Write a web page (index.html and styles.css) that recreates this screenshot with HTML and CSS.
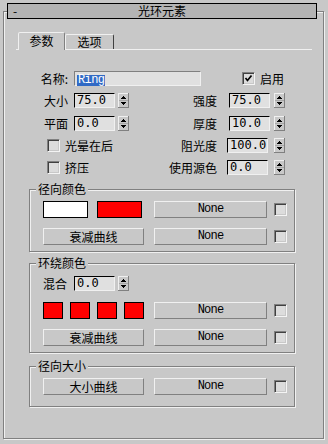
FILE: index.html
```html
<!DOCTYPE html>
<html lang="zh">
<head>
  <meta charset="UTF-8" />
  <title>光环元素</title>
  <link rel="stylesheet" href="styles.css">
</head>
<body>
  <svg class="defs" width="0" height="0">
    <symbol id="spin" viewBox="0 0 11 15">
      <rect x="0" y="0" width="11" height="15" fill="#c8c8c8"/>
      <path d="M0 0.5H10.5M0.5 0V14.5" stroke="#f0f0f0"/>
      <path d="M0 14.5H11M10.5 0V15" stroke="#808080"/>
      <path d="M1 7.5H10" stroke="#a8a8a8"/>
      <path d="M5 3h1v1H5zM4 4h3v1H4zM3 5h5v1H3z" fill="#000"/>
      <path d="M3 9h5v1H3zM4 10h3v1H4zM5 11h1v1H5z" fill="#000"/>
    </symbol>
  </svg>

  <div class="panel">
    <div class="titlebar">
      <span class="collapse">-</span>
      <span class="title">光环元素</span>
      <span></span>
    </div>

    <div class="tabs">
      <div class="tab active">参数</div>
      <div class="tab">选项</div>
    </div>

    <!-- 参数 -->
    <div class="params">
      <div class="row">
        <span class="label">名称:</span>
        <div class="field name"><span class="sel">Ring</span></div>
        <span class="check on">
          <svg width="9" height="9" viewBox="0 0 9 9"><polyline points="1.5,4 3.5,6.5 7.5,1.5" fill="none" stroke="#000" stroke-width="1.7"/></svg>
        </span>
        <span class="check-label">启用</span>
      </div>

      <div class="row">
        <span class="label">大小</span>
        <div class="field num">75.0</div>
        <svg class="spin"><use href="#spin"/></svg>
        <span class="label-r">强度</span>
        <div class="field num">75.0</div>
        <svg class="spin"><use href="#spin"/></svg>
      </div>

      <div class="row row-c">
        <span class="label">平面</span>
        <div class="field num">0.0</div>
        <svg class="spin"><use href="#spin"/></svg>
        <span class="label-r">厚度</span>
        <div class="field num">10.0</div>
        <svg class="spin"><use href="#spin"/></svg>
      </div>

      <div class="row row-check">
        <div class="cell-left">
          <span class="check"></span>
          <span class="check-label">光晕在后</span>
        </div>
        <span class="label-r">阻光度</span>
        <div class="field num">100.0</div>
        <svg class="spin"><use href="#spin"/></svg>
      </div>

      <div class="row row-check">
        <div class="cell-left">
          <span class="check"></span>
          <span class="check-label">挤压</span>
        </div>
        <span class="label-r">使用源色</span>
        <div class="field num">0.0</div>
        <svg class="spin"><use href="#spin"/></svg>
      </div>
    </div>

    <!-- 径向颜色 -->
    <div class="group">
      <div class="group-title">径向颜色</div>
      <div class="group-row">
        <span class="swatch wide white"></span>
        <span class="swatch wide red"></span>
        <button class="btn none">None</button>
        <span class="check box"></span>
      </div>
      <div class="group-row">
        <button class="btn curve">衰减曲线</button>
        <button class="btn none">None</button>
        <span class="check box"></span>
      </div>
    </div>

    <!-- 环绕颜色 -->
    <div class="group g2">
      <div class="group-title">环绕颜色</div>
      <div class="row mix">
        <span class="label">混合</span>
        <div class="field num">0.0</div>
        <svg class="spin"><use href="#spin"/></svg>
      </div>
      <div class="group-row">
        <span class="swatch sq red"></span>
        <span class="swatch sq red"></span>
        <span class="swatch sq red"></span>
        <span class="swatch sq red"></span>
        <button class="btn none">None</button>
        <span class="check box"></span>
      </div>
      <div class="group-row">
        <button class="btn curve">衰减曲线</button>
        <button class="btn none">None</button>
        <span class="check box"></span>
      </div>
    </div>

    <!-- 径向大小 -->
    <div class="group g3">
      <div class="group-title">径向大小</div>
      <div class="group-row">
        <button class="btn curve">大小曲线</button>
        <button class="btn none">None</button>
        <span class="check box"></span>
      </div>
    </div>
  </div>
</body>
</html>
```

FILE: styles.css
```css
* {
  margin: 0;
  padding: 0;
  box-sizing: border-box;
}

html, body {
  width: 328px;
  height: 444px;
  overflow: hidden;
}

body {
  background: #c8c8c8;
  color: #000;
  font-family: "Noto Sans CJK SC", sans-serif;
  font-size: 12px;
  line-height: 14px;
}

.defs {
  position: absolute;
}

.panel {
  margin: 11px 0 0 3px;
  width: 321px;
  height: 428px;
  border: 1px solid #808080;
  box-shadow: inset 1px 1px 0 #f0f0f0, 1px 1px 0 #f0f0f0;
}

.titlebar {
  display: grid;
  grid-template-columns: 1fr auto 1fr;
  align-items: center;
  width: 310px;
  height: 16px;
  margin: -9px 0 0 3px;
  border: 1px solid #000;
  background: #b4b4b4;
}

.collapse {
  padding-left: 5px;
}

/* tabs */
.tabs {
  display: flex;
  align-items: flex-end;
  width: 296px;
  height: 18px;
  margin: 13px 0 0 12px;
  padding-left: 2px;
  border-bottom: 1px solid #f0f0f0;
}

.tab {
  width: 49px;
  height: 15px;
  border: 1px solid;
  border-bottom: none;
  border-color: #f0f0f0 #404040 transparent #f0f0f0;
  border-radius: 2px 2px 0 0;
  text-align: center;
  line-height: 13px;
}

.tab.active {
  width: 47px;
  height: 18px;
  margin-bottom: -1px;
  border-right-color: #808080;
  background: #c8c8c8;
  line-height: 15px;
}

/* parameter rows */
.params {
  margin-top: 21px;
}

.row {
  display: flex;
  align-items: center;
  height: 15px;
  margin-top: 7px;
}

.params .row:first-child {
  margin-top: 0;
}

.row-c {
  margin-top: 8px;
}

.label {
  width: 64px;
  text-align: right;
}

.label-r {
  width: 88px;
  text-align: right;
}

.field {
  height: 15px;
  margin-left: 6px;
  padding-left: 2px;
  background: #e0e0e0;
  border: 1px solid;
  border-color: #000 #f0f0f0 #f0f0f0 #000;
  font-family: "DejaVu Sans Mono", monospace;
  font-size: 12px;
  line-height: 13px;
  white-space: nowrap;
}

.field.num {
  width: 41px;
}

.field.name {
  width: 127px;
  padding-top: 1px;
  border-color: #808080 #f0f0f0 #f0f0f0 #808080;
}

.sel {
  display: inline-block;
  height: 11px;
  padding: 0 1px;
  background: #316ac5;
  color: #fff;
  font-family: "Liberation Mono", monospace;
  font-size: 12px;
  line-height: 11px;
  letter-spacing: -0.6px;
}

.label-r + .field {
  margin-left: 12px;
}

.row-check .label-r + .field {
  margin-left: 10px;
}

.spin {
  width: 11px;
  height: 15px;
  margin-left: 3px;
  flex: none;
}

.label-r ~ .spin {
  margin-left: 4px;
}

.row-check .label-r ~ .spin {
  margin-left: 6px;
}

.cell-left {
  display: flex;
  align-items: center;
  width: 125px;
  padding-left: 43px;
}

/* checkboxes */
.check {
  display: flex;
  align-items: center;
  justify-content: center;
  width: 13px;
  height: 13px;
  flex: none;
  background: #dcdcdc;
  border: 1px solid;
  border-color: #808080 #f4f4f4 #f4f4f4 #808080;
  box-shadow: inset 1px 1px 0 #404040, inset -1px -1px 0 #c8c8c8;
}

.check.on {
  margin-left: 41px;
}

.check-label {
  margin-left: 5px;
}

.check.box {
  margin-left: 7px;
}

/* group boxes */
.group {
  width: 266px;
  margin: 14px 0 0 25px;
  padding: 0 0 6px 13px;
  border: 1px solid #808080;
  box-shadow: inset 1px 1px 0 #f0f0f0, 1px 1px 0 #f0f0f0;
}

.g2 {
  margin-top: 11px;
}

.g3 {
  margin-top: 13px;
  padding-bottom: 11px;
}

.group-title {
  display: table;
  margin: -8px 0 0 -7px;
  padding: 0 2px;
  background: #c8c8c8;
}

.group-row {
  display: flex;
  align-items: center;
  height: 17px;
  margin-top: 10px;
}

.group-title + .group-row {
  margin-top: 5px;
}

.group .mix {
  margin-top: 6px;
}

.mix + .group-row {
  margin-top: 11px;
}

.mix .label {
  width: 24px;
}

.mix .field {
  margin-left: 7px;
}

.swatch {
  height: 17px;
  border: 1px solid #000;
}

.swatch.wide {
  width: 45px;
}

.swatch.wide + .swatch {
  margin-left: 9px;
}

.swatch.sq {
  width: 20px;
}

.swatch.sq + .swatch {
  margin-left: 7px;
}

.white {
  background: #fff;
}

.red {
  background: #f00;
}

.btn {
  height: 17px;
  margin-left: 10px;
  background: #c8c8c8;
  border: 1px solid;
  border-color: #f0f0f0 #808080 #808080 #f0f0f0;
  color: #000;
  font: inherit;
  line-height: 15px;
  text-align: center;
}

.btn.curve {
  width: 101px;
  margin-left: 0;
}

.btn.none {
  width: 113px;
  font-family: "Liberation Mono", monospace;
  letter-spacing: -0.8px;
}

.swatch.wide + .btn {
  margin-left: 12px;
}
```
